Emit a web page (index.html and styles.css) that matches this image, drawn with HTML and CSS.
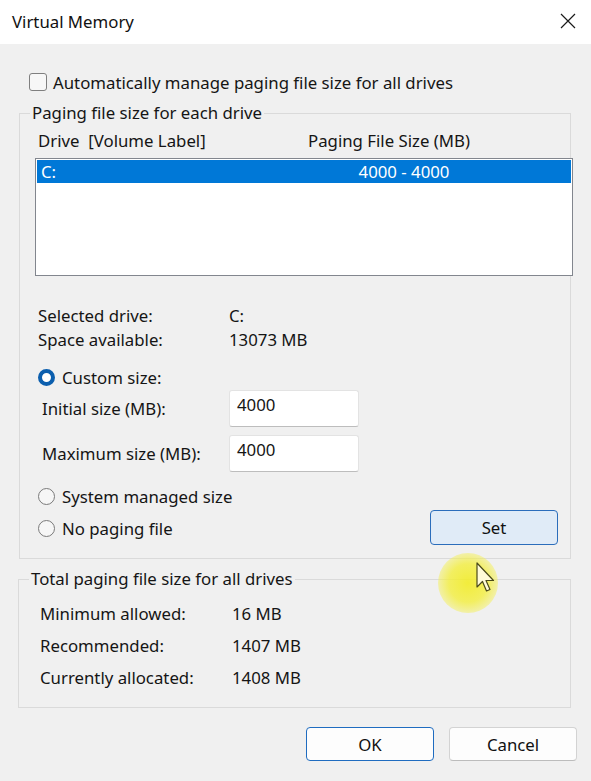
FILE: index.html
```html
<!DOCTYPE html>
<html lang="en">
<head>
<meta charset="utf-8">
<title>Virtual Memory</title>
<link rel="stylesheet" href="styles.css">
</head>
<body>
<div class="window">
  <div class="titlebar">
    <span class="title">Virtual Memory</span>
    <span class="close">
      <svg width="16" height="16" viewBox="0 0 16 16"><path d="M1 1 L15 15 M15 1 L1 15" stroke="#1a1a1a" stroke-width="1.2" fill="none"/></svg>
    </span>
  </div>
  <div class="content">
    <label class="check-row"><span class="checkbox"></span><span>Automatically manage paging file size for all drives</span></label>

    <fieldset class="group group-drive">
      <legend>Paging file size for each drive</legend>
      <div class="list-header"><span class="hdr-drive">Drive  [Volume Label]</span><span class="hdr-size">Paging File Size (MB)</span></div>
      <div class="listbox">
        <div class="list-row selected"><span class="cell-drive">C:</span><span class="cell-size">4000 - 4000</span></div>
      </div>

      <div class="info">
        <div class="info-row"><span class="info-label">Selected drive:</span><span>C:</span></div>
        <div class="info-row"><span class="info-label">Space available:</span><span>13073 MB</span></div>
      </div>

      <div class="radio-row custom"><span class="radio checked"></span><span>Custom size:</span></div>
      <div class="size-row"><span class="size-label">Initial size (MB):</span><span class="textbox">4000</span></div>
      <div class="size-row second"><span class="size-label">Maximum size (MB):</span><span class="textbox">4000</span></div>
      <div class="radio-row system"><span class="radio"></span><span>System managed size</span></div>
      <div class="last-row">
        <div class="radio-row"><span class="radio"></span><span>No paging file</span></div>
        <button class="btn btn-set">Set</button>
      </div>
    </fieldset>

    <fieldset class="group group-total">
      <legend>Total paging file size for all drives</legend>
      <div class="total-row"><span class="total-label">Minimum allowed:</span><span>16 MB</span></div>
      <div class="total-row"><span class="total-label">Recommended:</span><span>1407 MB</span></div>
      <div class="total-row"><span class="total-label">Currently allocated:</span><span>1408 MB</span></div>
    </fieldset>

    <div class="buttons">
      <button class="btn btn-ok">OK</button>
      <button class="btn btn-cancel">Cancel</button>
    </div>
  </div>

  <div class="halo"></div>
  <svg class="cursor" width="20" height="32" viewBox="0 0 20 32">
    <path d="M1 1 L1 25 L6.5 19.5 L10.5 29 L14 27.5 L10 18.5 L17.5 18.5 Z" fill="#fffbd8" stroke="#4a4a1a" stroke-width="1.2" stroke-linejoin="round"/>
  </svg>
</div>
</body>
</html>
```

FILE: styles.css
```css
html, body {
  margin: 0;
  padding: 0;
}

body {
  background: #f0f0f0;
  font-family: "Noto Sans", "Open Sans", "DejaVu Sans", sans-serif;
  font-size: 16.8px;
  color: #151515;
}

.window {
  position: relative;
  width: 591px;
  height: 781px;
  overflow: hidden;
}

.titlebar {
  height: 44px;
  background: #ffffff;
  display: flex;
  align-items: center;
  justify-content: space-between;
  padding: 0 15px 0 12px;
  box-sizing: border-box;
}

.title {
  font-size: 16.8px;
  color: #111;
  margin-top: -1px;
}

.close {
  display: flex;
  margin-top: -2px;
}

.content {
  padding-top: 28px;
}

.check-row {
  display: flex;
  align-items: center;
  height: 20px;
  padding-left: 29px;
  gap: 6px;
}

.checkbox {
  width: 16px;
  height: 16px;
  border: 1px solid #7f7f7f;
  border-radius: 3px;
  background: #f7f7f7;
}

.group {
  margin: 11px 20px 0 19px;
  padding: 0;
  border: 1px solid #dadada;
  min-width: 0;
}

.group legend {
  line-height: 20px;
  padding: 0 2px;
  margin-left: 10px;
}

.list-header {
  display: flex;
  height: 20px;
  line-height: 20px;
  margin-top: 8px;
}

.hdr-drive {
  white-space: pre;
  width: 270px;
  padding-left: 18px;
}

.listbox {
  margin: 7px -3px 0 15px;
  height: 114px;
  border: 1px solid #82868e;
  background: #ffffff;
  padding: 1px;
  box-sizing: content-box;
}

.list-row {
  display: flex;
  height: 23px;
  line-height: 23px;
}

.list-row.selected {
  background: #0078d7;
  color: #ffffff;
}

.cell-drive {
  width: 268px;
  padding-left: 4px;
}

.cell-size {
  width: 190px;
  text-align: center;
}

.info {
  margin-top: 28px;
}

.info-row {
  display: flex;
  height: 24px;
  line-height: 24px;
  padding-left: 18px;
}

.info-label {
  width: 191px;
}

.radio-row {
  display: flex;
  align-items: center;
  gap: 7px;
  padding-left: 18px;
  height: 24px;
}

.radio-row.custom {
  margin-top: 14px;
  height: 23px;
}

.radio-row.system {
  margin-top: 12px;
}

.radio {
  width: 15px;
  height: 15px;
  border: 1px solid #7a7a7a;
  border-radius: 50%;
  background: #f6f6f6;
  flex: none;
}

.radio.checked {
  width: 9px;
  height: 9px;
  border: 4px solid #0c5fae;
  background: #ffffff;
}

.size-row {
  display: flex;
  align-items: center;
  padding-left: 22px;
  height: 38px;
}

.size-row.second {
  margin-top: 7px;
}

.size-label {
  width: 187px;
}

.textbox {
  width: 121px;
  height: 32px;
  padding: 3px 0 0 7px;
  line-height: 22px;
  background: #ffffff;
  border: 1px solid #e3e3e3;
  border-bottom-color: #bdbdbd;
  border-radius: 3px;
  box-sizing: content-box;
}

.last-row {
  display: flex;
  align-items: center;
  justify-content: space-between;
  margin-top: 2px;
  padding-right: 12px;
  margin-bottom: 13px;
}

.last-row .radio-row {
  margin-top: 2px;
}

.btn {
  font: inherit;
  color: #111;
  width: 128px;
  height: 35px;
  border-radius: 4px;
  padding: 0;
  cursor: default;
}

.btn-set {
  background: #e0ebf7;
  border: 1px solid #2b6dbb;
}

.group-total {
  margin-top: 10px;
  margin-left: 18px;
  padding-top: 9px;
  padding-bottom: 13px;
}

.total-row {
  display: flex;
  height: 32px;
  line-height: 31px;
  padding-left: 21px;
}

.total-label {
  width: 192px;
}

.buttons {
  display: flex;
  justify-content: flex-end;
  gap: 15px;
  margin-top: 19px;
  padding-right: 14px;
}

.btn-ok,
.btn-cancel {
  height: 34px;
  background: #fdfdfd;
}

.btn-ok {
  border: 1px solid #1f6cc0;
}

.btn-cancel {
  border: 1px solid #d3d3d3;
  border-bottom-color: #bcbcbc;
}

.halo {
  position: absolute;
  left: 438px;
  top: 553px;
  width: 60px;
  height: 60px;
  border-radius: 50%;
  background: radial-gradient(circle, rgba(242, 236, 40, 0.9) 0%, rgba(243, 238, 60, 0.8) 45%, rgba(245, 242, 130, 0.35) 82%, rgba(245, 242, 150, 0) 100%);
}

.cursor {
  position: absolute;
  left: 476px;
  top: 562px;
}
```
